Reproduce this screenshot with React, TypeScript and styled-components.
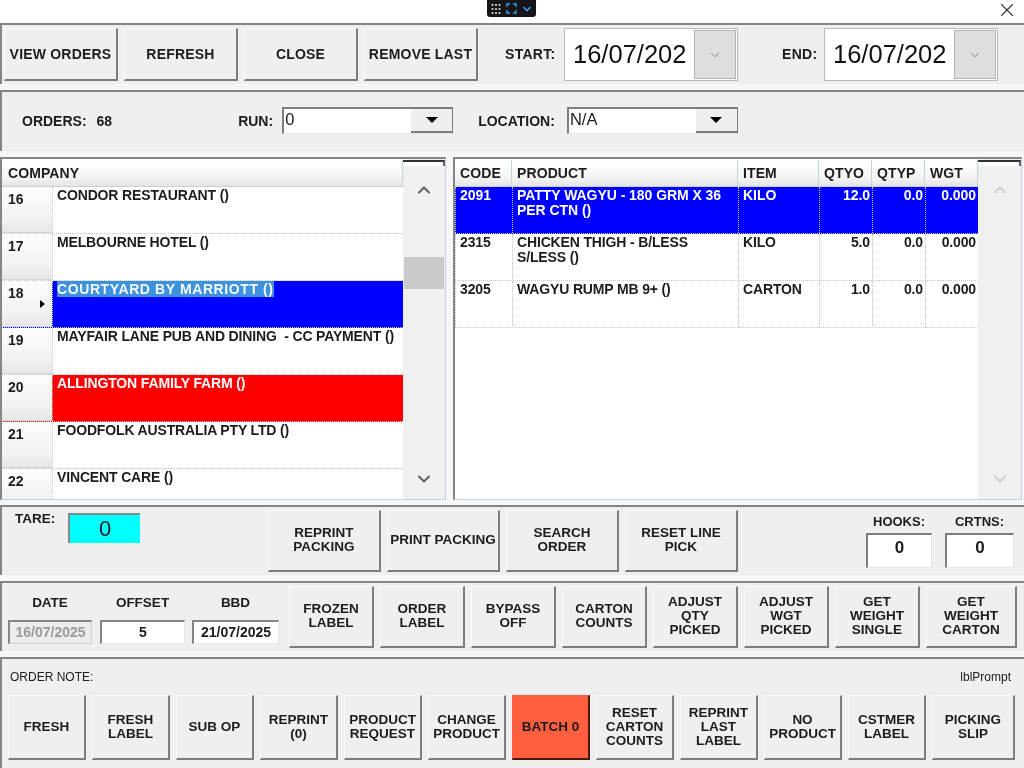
import styled, { createGlobalStyle } from "styled-components";
import { ChevronDown, ChevronUp, X } from "lucide-react";

const GlobalStyle = createGlobalStyle`
  html, body {
    margin: 0;
    padding: 0;
    background: #f6f6f6;
    overflow: hidden;
  }
  * {
    box-sizing: border-box;
  }
`;

const Screen = styled.div`
  position: relative;
  width: 1024px;
  height: 768px;
  overflow: hidden;
  background: #f6f6f6;
  color: #1c1c1c;
  font-family: "Liberation Sans", Arial, sans-serif;
  font-size: 14px;
  font-weight: 700;
  filter: blur(0.3px);
`;

const TitleBar = styled.div`
  height: 23px;
  background: #ffffff;
  display: flex;
  justify-content: flex-end;
  align-items: center;
  padding: 0 6px 3px 0;
  color: #333;
`;

const FloatingBar = styled.div`
  position: absolute;
  left: 487px;
  top: 0;
  width: 49px;
  height: 17px;
  background: #16161a;
  border-radius: 0 0 3px 3px;
  display: flex;
  align-items: center;
  justify-content: space-between;
  padding: 0 4px 0 4px;
`;

const Panel = styled.div<{ $height: number; $gap?: number }>`
  height: ${(p) => p.$height}px;
  margin-bottom: ${(p) => p.$gap ?? 6}px;
  border-top: 2px solid #858585;
  border-left: 2px solid #858585;
  background: #efefef;
`;

const TopRow = styled.div`
  display: flex;
  align-items: flex-start;
  padding: 3px 0 0 2px;
`;

const Btn = styled.div<{
  $w: number;
  $h: number;
  $gap?: number;
  $bg?: string;
  $lift?: number;
  $size?: number;
  $track?: number;
}>`
  width: ${(p) => p.$w}px;
  height: ${(p) => p.$h}px;
  flex: none;
  margin-right: ${(p) => p.$gap ?? 6}px;
  padding-bottom: ${(p) => p.$lift ?? 0}px;
  background: ${(p) => p.$bg ?? "#efefef"};
  border-top: 1px solid ${(p) => (p.$bg ? p.$bg : "#fafafa")};
  border-left: 1px solid ${(p) => (p.$bg ? p.$bg : "#fafafa")};
  border-right: 2px solid ${(p) => (p.$bg ? "#4a1a10" : "#7d7d7d")};
  border-bottom: 2px solid ${(p) => (p.$bg ? "#4a1a10" : "#7d7d7d")};
  display: flex;
  align-items: center;
  justify-content: center;
  text-align: center;
  font-size: ${(p) => p.$size ?? 13.5}px;
  line-height: 14px;
  white-space: pre;
  letter-spacing: ${(p) => p.$track ?? 0}px;
`;

const FieldLabel = styled.div<{ $w: number; $ml: number }>`
  width: ${(p) => p.$w}px;
  margin-left: ${(p) => p.$ml}px;
  flex: none;
  line-height: 53px;
  white-space: nowrap;
  letter-spacing: 0.3px;
`;

const DateBox = styled.div`
  width: 174px;
  height: 53px;
  flex: none;
  background: #ffffff;
  border: 1px solid #b9b9b9;
  display: flex;
  justify-content: space-between;
  align-items: stretch;
  padding: 1px;
  font-size: 25.5px;
  font-weight: 400;
  line-height: 49px;
  color: #111;
`;

const DateText = styled.div`
  padding-left: 7px;
  overflow: hidden;
  white-space: nowrap;
`;

const DateDrop = styled.div`
  width: 42px;
  flex: none;
  background: #dedede;
  border: 1px solid #b5b5b5;
  display: flex;
  align-items: center;
  justify-content: center;
  color: #777;
`;

const FilterRow = styled.div`
  height: 58px;
  display: flex;
  align-items: center;
  padding-bottom: 1px;
`;

const InlineLabel = styled.div<{ $ml: number }>`
  margin-left: ${(p) => p.$ml}px;
  white-space: nowrap;
`;

const Combo = styled.div<{ $ml: number }>`
  width: 171px;
  height: 27px;
  margin-left: ${(p) => p.$ml}px;
  flex: none;
  display: flex;
  background: #ffffff;
  border-top: 2px solid #7d7d7d;
  border-left: 2px solid #7d7d7d;
  border-right: 1px solid #7d7d7d;
  border-bottom: 1px solid #e6e6e6;
  font-size: 16.5px;
  font-weight: 400;
  line-height: 21px;
  color: #222;
`;

const ComboText = styled.div`
  flex: 1;
  padding-left: 1px;
`;

const ComboDrop = styled.div`
  width: 41px;
  background: #efefef;
  border-bottom: 2px solid #7d7d7d;
  display: flex;
  align-items: center;
  justify-content: center;
`;

const DownTriangle = styled.div`
  width: 0;
  height: 0;
  border-left: 6px solid transparent;
  border-right: 6px solid transparent;
  border-top: 6px solid #000;
`;

const GridsRow = styled.div`
  height: 343px;
  margin-bottom: 5px;
  display: flex;
  justify-content: space-between;
  padding-right: 2px;
`;

const GridFrame = styled.div<{ $w: number }>`
  width: ${(p) => p.$w}px;
  height: 343px;
  display: flex;
  background: #ffffff;
  border-top: 2px solid #858585;
  border-left: 2px solid #858585;
  border-right: 1px solid #c5d2de;
  border-bottom: 1px solid #c5d2de;
  overflow: hidden;
`;

const GridBody = styled.div`
  flex: 1;
  min-width: 0;
`;

const HeaderRow = styled.div`
  height: 27px;
  margin-top: 1px;
  display: flex;
  background: linear-gradient(#ffffff, #f3f3f3 70%, #e4e4e4);
  border-bottom: 1px solid #cfcfcf;
`;

const HeaderCell = styled.div<{ $w?: number }>`
  width: ${(p) => (p.$w ? `${p.$w}px` : "auto")};
  flex: ${(p) => (p.$w ? "none" : 1)};
  padding-left: ${(p) => (p.$w ? 5 : 6)}px;
  line-height: 27px;
  border-right: 1px solid #c2d6d8;
  letter-spacing: 0.1px;
`;

const Row = styled.div<{ $bg?: string; $fg?: string; $wide?: boolean }>`
  height: 47px;
  display: flex;
  background: ${(p) => p.$bg ?? "#ffffff"};
  color: ${(p) => p.$fg ?? "#1c1c1c"};
  border-bottom: 1px dotted #c4c4c4;
  letter-spacing: ${(p) => (p.$wide ? -0.05 : -0.15)}px;
`;

const RowHead = styled.div`
  position: relative;
  width: 50px;
  flex: none;
  padding: 4px 0 0 6px;
  line-height: 16px;
  background: linear-gradient(#fdfdfd, #f2f2f2 70%, #e6e6e6);
  border-bottom: 1px solid #cfd6d8;
  color: #1c1c1c;
`;

const RowMarker = styled.div`
  position: absolute;
  left: 38px;
  top: 19px;
  width: 0;
  height: 0;
  border-top: 4px solid transparent;
  border-bottom: 4px solid transparent;
  border-left: 5px solid #000;
`;

const Cell = styled.div<{ $w?: number; $right?: boolean }>`
  width: ${(p) => (p.$w ? `${p.$w}px` : "auto")};
  flex: ${(p) => (p.$w ? "none" : 1)};
  padding: 1px ${(p) => (p.$right ? 2 : 4)}px 0 4px;
  text-align: ${(p) => (p.$right ? "right" : "left")};
  line-height: 15px;
  border-left: 1px dotted #c4c4c4;
  white-space: pre-wrap;
`;

const Highlight = styled.span`
  background: #3c92dc;
  color: #f4f8ff;
  letter-spacing: 0.6px;
`;

const ScrollBar = styled.div<{ $faded?: boolean; $w: number }>`
  position: relative;
  width: ${(p) => p.$w}px;
  flex: none;
  background: #f0f0f0;
  display: flex;
  flex-direction: column;
  align-items: center;
  justify-content: space-between;
  padding: 21px 0 10px;
  color: ${(p) => (p.$faded ? "#d0d0d0" : "#5f5f5f")};
`;

const CornerCell = styled.div`
  position: absolute;
  top: 1px;
  left: 0;
  width: 100%;
  height: 6px;
  background: #ffffff;
  border-top: 2px solid #333;
  border-right: 2px solid #666;
`;

const Thumb = styled.div`
  position: absolute;
  top: 98px;
  left: 1px;
  width: 40px;
  height: 32px;
  background: #cacaca;
`;

const TareRow = styled.div`
  height: 68px;
  display: flex;
  align-items: flex-start;
  padding-top: 3px;
`;

const TareLabel = styled.div`
  margin: 1px 0 0 13px;
  width: 53px;
  line-height: 16px;
  font-size: 13.5px;
`;

const TareValue = styled.div`
  width: 72px;
  height: 30px;
  margin-top: 3px;
  flex: none;
  background: #00ffff;
  border-top: 2px solid #808a8a;
  border-left: 2px solid #808a8a;
  text-align: center;
  font-size: 22px;
  font-weight: 400;
  line-height: 28px;
  margin-right: 128px;
`;

const Counter = styled.div<{ $w: number; $ml: number }>`
  width: ${(p) => p.$w}px;
  margin-left: ${(p) => p.$ml}px;
  flex: none;
  text-align: center;
`;

const CounterLabel = styled.div`
  font-size: 13px;
  line-height: 16px;
  margin: 4px 0 3px;
`;

const CounterBox = styled.div`
  height: 35px;
  background: #ffffff;
  border-top: 2px solid #7d7d7d;
  border-left: 2px solid #7d7d7d;
  border-right: 1px solid #e4e4e4;
  border-bottom: 1px solid #e4e4e4;
  font-size: 17px;
  line-height: 26px;
`;

const LabelsRow = styled.div`
  display: flex;
  align-items: flex-start;
  padding: 3px 0 0 6px;
`;

const DateField = styled.div<{ $w: number; $gap: number }>`
  width: ${(p) => p.$w}px;
  margin-right: ${(p) => p.$gap}px;
  padding-top: 9px;
  flex: none;
  text-align: center;
`;

const DateFieldLabel = styled.div`
  font-size: 13.5px;
  line-height: 16px;
  margin-bottom: 9px;
`;

const DateFieldInput = styled.div<{ $muted?: boolean }>`
  height: 24px;
  background: ${(p) => (p.$muted ? "#ececec" : "#ffffff")};
  color: ${(p) => (p.$muted ? "#9a9a9a" : "#1c1c1c")};
  border-top: 2px solid #858585;
  border-left: 2px solid #858585;
  border-right: 1px solid ${(p) => (p.$muted ? "#cfcfcf" : "#e4e4e4")};
  border-bottom: 1px solid ${(p) => (p.$muted ? "#cfcfcf" : "#e4e4e4")};
  line-height: 20px;
`;

const NoteRow = styled.div`
  height: 36px;
  display: flex;
  justify-content: space-between;
  align-items: center;
  padding: 0 13px 0 8px;
  font-size: 12px;
  font-weight: 400;
`;

const ActionRow = styled.div`
  display: flex;
  padding-left: 6px;
`;

const topButtons = ["VIEW ORDERS", "REFRESH", "CLOSE", "REMOVE LAST"];
const companies = [
  { no: 16, name: "CONDOR RESTAURANT ()" },
  { no: 17, name: "MELBOURNE HOTEL ()" },
  { no: 18, name: "COURTYARD BY MARRIOTT ()", bg: "#0000ff", fg: "#fff", current: true },
  { no: 19, name: "MAYFAIR LANE PUB AND DINING  - CC PAYMENT ()" },
  { no: 20, name: "ALLINGTON FAMILY FARM ()", bg: "#ff0000", fg: "#fff" },
  { no: 21, name: "FOODFOLK AUSTRALIA PTY LTD ()" },
  { no: 22, name: "VINCENT CARE ()" },
];
const lines = [
  { code: "2091", product: "PATTY WAGYU - 180 GRM X 36 PER CTN ()", item: "KILO", o: "12.0", bg: "#0000ff", fg: "#fff" },
  { code: "2315", product: "CHICKEN THIGH - B/LESS S/LESS ()", item: "KILO", o: "5.0" },
  { code: "3205", product: "WAGYU RUMP MB 9+ ()", item: "CARTON", o: "1.0" },
];
const midButtons = ["REPRINT\nPACKING", "PRINT PACKING", "SEARCH\nORDER", "RESET LINE\nPICK"];
const labelButtons = [
  "FROZEN\nLABEL",
  "ORDER\nLABEL",
  "BYPASS\nOFF",
  "CARTON\nCOUNTS",
  "ADJUST\nQTY\nPICKED",
  "ADJUST\nWGT\nPICKED",
  "GET\nWEIGHT\nSINGLE",
  "GET\nWEIGHT\nCARTON",
];
const actionButtons = [
  "FRESH",
  "FRESH\nLABEL",
  "SUB OP",
  "REPRINT\n(0)",
  "PRODUCT\nREQUEST",
  "CHANGE\nPRODUCT",
  "BATCH 0",
  "RESET\nCARTON\nCOUNTS",
  "REPRINT\nLAST\nLABEL",
  "NO\nPRODUCT",
  "CSTMER\nLABEL",
  "PICKING\nSLIP",
];

export default function App() {
  return (
    <Screen>
      <GlobalStyle />
      <TitleBar>
        <X size={22} strokeWidth={1.2} />
      </TitleBar>
      <FloatingBar>
        <svg width="10" height="10" viewBox="0 0 10 10" fill="#d0d0d0">
          {[1, 5, 9].map((y) =>
            [1.5, 5, 8.5].map((x) => <circle key={`${x}-${y}`} cx={x} cy={y} r="1.1" />),
          )}
        </svg>
        <svg width="11" height="11" viewBox="0 0 11 11" fill="none" stroke="#3a9df0" strokeWidth="1.4">
          <path d="M1 4V1h3M7 1h3v3M10 7v3H7M4 10H1V7" />
        </svg>
        <svg width="10" height="8" viewBox="0 0 10 8" fill="none" stroke="#3a9df0" strokeWidth="1.6">
          <path d="M1.5 2 5 5.5 8.5 2" />
        </svg>
      </FloatingBar>

      <Panel $height={61}>
        <TopRow>
          {topButtons.map((label) => (
            <Btn key={label} $w={114} $h={53} $size={14} $track={0.2}>
              {label}
            </Btn>
          ))}
          <FieldLabel $w={59} $ml={21}>START:</FieldLabel>
          <DateBox>
            <DateText>16/07/202</DateText>
            <DateDrop>
              <ChevronDown size={14} strokeWidth={1.5} />
            </DateDrop>
          </DateBox>
          <FieldLabel $w={42} $ml={44}>END:</FieldLabel>
          <DateBox>
            <DateText>16/07/202</DateText>
            <DateDrop>
              <ChevronDown size={14} strokeWidth={1.5} />
            </DateDrop>
          </DateBox>
        </TopRow>
      </Panel>

      <Panel $height={61}>
        <FilterRow>
          <InlineLabel $ml={20}>ORDERS:</InlineLabel>
          <InlineLabel $ml={10}>68</InlineLabel>
          <InlineLabel $ml={126}>RUN:</InlineLabel>
          <Combo $ml={9}>
            <ComboText>0</ComboText>
            <ComboDrop>
              <DownTriangle />
            </ComboDrop>
          </Combo>
          <InlineLabel $ml={25}>LOCATION:</InlineLabel>
          <Combo $ml={12}>
            <ComboText>N/A</ComboText>
            <ComboDrop>
              <DownTriangle />
            </ComboDrop>
          </Combo>
        </FilterRow>
      </Panel>

      <GridsRow>
        <GridFrame $w={446}>
          <GridBody>
            <HeaderRow>
              <HeaderCell>COMPANY</HeaderCell>
            </HeaderRow>
            {companies.map((c) => (
              <Row key={c.no} $bg={c.bg} $fg={c.fg}>
                <RowHead>
                  {c.no}
                  {c.current && <RowMarker />}
                </RowHead>
                <Cell>{c.current ? <Highlight>{c.name}</Highlight> : c.name}</Cell>
              </Row>
            ))}
          </GridBody>
          <ScrollBar $w={42}>
            <CornerCell />
            <ChevronUp size={20} strokeWidth={2.5} />
            <Thumb />
            <ChevronDown size={20} strokeWidth={2.5} />
          </ScrollBar>
        </GridFrame>
        <GridFrame $w={569}>
          <GridBody>
            <HeaderRow>
              <HeaderCell $w={57}>CODE</HeaderCell>
              <HeaderCell $w={226}>PRODUCT</HeaderCell>
              <HeaderCell $w={81}>ITEM</HeaderCell>
              <HeaderCell $w={53}>QTYO</HeaderCell>
              <HeaderCell $w={53}>QTYP</HeaderCell>
              <HeaderCell $w={53}>WGT</HeaderCell>
            </HeaderRow>
            {lines.map((l) => (
              <Row key={l.code} $bg={l.bg} $fg={l.fg} $wide={Boolean(l.bg)}>
                <Cell $w={57}>{l.code}</Cell>
                <Cell $w={226}>{l.product}</Cell>
                <Cell $w={81}>{l.item}</Cell>
                <Cell $w={53} $right>{l.o}</Cell>
                <Cell $w={53} $right>0.0</Cell>
                <Cell $right>0.000</Cell>
              </Row>
            ))}
          </GridBody>
          <ScrollBar $w={43} $faded>
            <CornerCell />
            <ChevronUp size={20} strokeWidth={2.5} />
            <ChevronDown size={20} strokeWidth={2.5} />
          </ScrollBar>
        </GridFrame>
      </GridsRow>

      <Panel $height={70}>
        <TareRow>
          <TareLabel>TARE:</TareLabel>
          <TareValue>0</TareValue>
          {midButtons.map((label) => (
            <Btn key={label} $w={113} $h={62} $lift={2}>
              {label}
            </Btn>
          ))}
          <Counter $w={66} $ml={122}>
            <CounterLabel>HOOKS:</CounterLabel>
            <CounterBox>0</CounterBox>
          </Counter>
          <Counter $w={69} $ml={13}>
            <CounterLabel>CRTNS:</CounterLabel>
            <CounterBox>0</CounterBox>
          </Counter>
        </TareRow>
      </Panel>

      <Panel $height={70}>
        <LabelsRow>
          <DateField $w={84} $gap={8}>
            <DateFieldLabel>DATE</DateFieldLabel>
            <DateFieldInput $muted>16/07/2025</DateFieldInput>
          </DateField>
          <DateField $w={85} $gap={7}>
            <DateFieldLabel>OFFSET</DateFieldLabel>
            <DateFieldInput>5</DateFieldInput>
          </DateField>
          <DateField $w={87} $gap={10}>
            <DateFieldLabel>BBD</DateFieldLabel>
            <DateFieldInput>21/07/2025</DateFieldInput>
          </DateField>
          {labelButtons.map((label, i) => (
            <Btn key={label} $w={i === 7 ? 91 : 85} $h={62} $lift={2}>
              {label}
            </Btn>
          ))}
        </LabelsRow>
      </Panel>

      <Panel $height={111} $gap={0}>
        <NoteRow>
          <span>ORDER NOTE:</span>
          <span>lblPrompt</span>
        </NoteRow>
        <ActionRow>
          {actionButtons.map((label, i) => (
            <Btn key={label} $w={i === 11 ? 83 : 78} $h={65} $lift={1} $bg={i === 6 ? "#ff5f3f" : undefined}>
              {label}
            </Btn>
          ))}
        </ActionRow>
      </Panel>
    </Screen>
  );
}
